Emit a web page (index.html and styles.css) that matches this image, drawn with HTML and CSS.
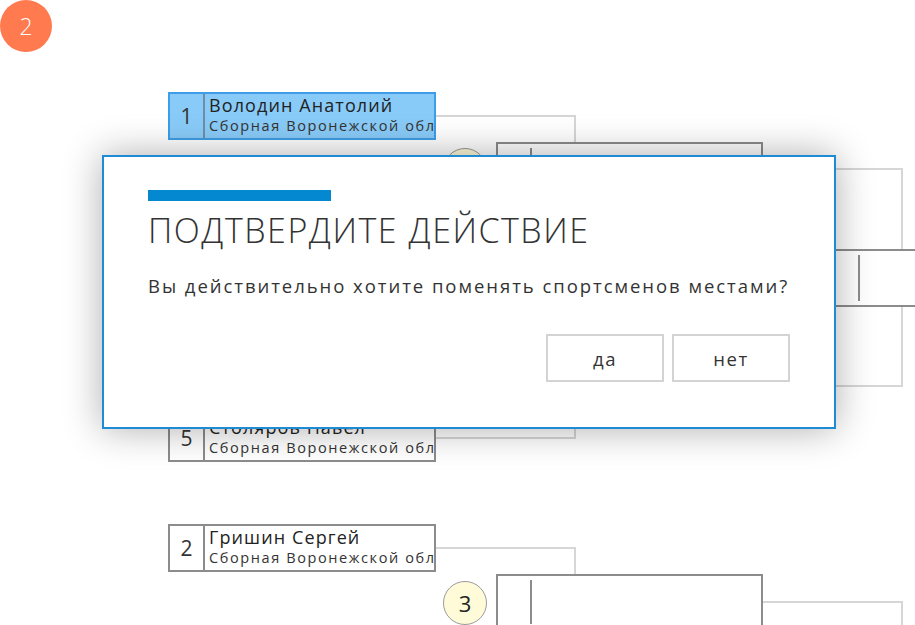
FILE: index.html
```html
<!DOCTYPE html>
<html lang="ru">
<head>
<meta charset="utf-8">
<title>Сетка</title>
<link rel="stylesheet" href="styles.css">
</head>
<body>
<div class="canvas">
  <div class="step-badge">2</div>

  <svg class="links" width="915" height="625" viewBox="0 0 915 625">
    <g fill="none" stroke="#d6d6d6" stroke-width="2">
      <polyline points="436,116 575,116 575,142"/>
      <polyline points="436,222 575,222 575,196"/>
      <polyline points="436,334 575,334 575,359"/>
      <polyline points="436,438 575,438 575,413"/>
      <polyline points="436,548 575,548 575,574"/>
      <polyline points="763,169 902,169 902,249"/>
      <polyline points="763,386 902,386 902,307"/>
      <polyline points="763,602 902,602 902,640"/>
    </g>
  </svg>

  <div class="slot slot-a selected">
    <div class="seed">1</div>
    <div class="who"><div class="name">Володин Анатолий</div><div class="team">Сборная Воронежской области</div></div>
  </div>
  <div class="slot slot-b"></div>
  <div class="slot slot-c"></div>
  <div class="slot slot-d">
    <div class="seed">5</div>
    <div class="who"><div class="name">Столяров Павел</div><div class="team">Сборная Воронежской области</div></div>
  </div>
  <div class="slot slot-e">
    <div class="seed">2</div>
    <div class="who"><div class="name">Гришин Сергей</div><div class="team">Сборная Воронежской области</div></div>
  </div>

  <div class="bout bout-1"><div class="bout-seed"></div></div>
  <div class="bout bout-2"><div class="bout-seed"></div></div>
  <div class="bout bout-3"><div class="bout-seed"></div></div>
  <div class="bout bout-4"><div class="bout-seed"></div></div>

  <div class="mat mat-1"></div>
  <div class="mat mat-3">3</div>
</div>

<div class="dialog">
  <div class="accent"></div>
  <h1 class="dialog-title">ПОДТВЕРДИТЕ ДЕЙСТВИЕ</h1>
  <p class="dialog-text">Вы действительно хотите поменять спортсменов местами?</p>
  <div class="actions">
    <button class="btn">да</button>
    <button class="btn">нет</button>
  </div>
</div>
</body>
</html>
```

FILE: styles.css
```css
html, body {
  margin: 0;
  padding: 0;
  background: #ffffff;
  overflow: hidden;
}
body {
  position: relative;
  width: 915px;
  height: 625px;
  font-family: "Open Sans", "Noto Sans", "DejaVu Sans", sans-serif;
  color: #333333;
}
.canvas {
  position: relative;
  width: 915px;
  height: 625px;
  overflow: hidden;
}
.step-badge {
  position: absolute;
  left: 0;
  top: 0;
  width: 52px;
  height: 52px;
  border-radius: 50%;
  background: #ff7a4f;
  color: #ffffff;
  font-size: 23px;
  font-weight: 300;
  display: flex;
  align-items: center;
  justify-content: center;
}
.links {
  position: absolute;
  left: 0;
  top: 0;
}

/* first-round slots */
.slot {
  position: absolute;
  left: 168px;
  width: 268px;
  height: 48px;
  box-sizing: border-box;
  border: 2px solid #8c8c8c;
  background: #ffffff;
  display: flex;
}
.slot-a { top: 92px; }
.slot-b { top: 198px; }
.slot-c { top: 310px; }
.slot-d { top: 414px; }
.slot-e { top: 524px; }
.slot.selected {
  background: #89cbf8;
  border-color: #3e9de6;
}
.seed {
  width: 33px;
  flex: none;
  border-right: 2px solid #8c8c8c;
  display: flex;
  align-items: center;
  justify-content: center;
  font-size: 21px;
  color: #333333;
}
.selected .seed { border-right-color: #6f8ea6; }
.who {
  flex: 1;
  min-width: 0;
  overflow: hidden;
  padding: 0 0 0 4px;
  white-space: nowrap;
}
.name {
  font-size: 18px;
  line-height: 22px;
  letter-spacing: 1.1px;
  color: #222222;
}
.team {
  font-size: 14.5px;
  line-height: 20px;
  letter-spacing: 1.6px;
  color: #333333;
}

/* second / third round bouts */
.bout {
  position: absolute;
  width: 267px;
  height: 56px;
  box-sizing: border-box;
  border: 2px solid #8c8c8c;
  background: #ffffff;
  display: flex;
  padding: 4px 0;
}
.bout-1 { left: 496px; top: 142px; }
.bout-2 { left: 496px; top: 359px; }
.bout-3 { left: 496px; top: 574px; }
.bout-4 { left: 824px; top: 249px; height: 58px; }
.bout-seed {
  width: 32px;
  flex: none;
  border-right: 2px solid #8c8c8c;
}

.mat {
  position: absolute;
  left: 443px;
  width: 44px;
  height: 44px;
  box-sizing: border-box;
  border-radius: 50%;
  border: 1.5px solid #9a9a9a;
  background: #fffbd9;
  display: flex;
  align-items: center;
  justify-content: center;
  font-size: 22px;
  color: #222222;
}
.mat-1 { top: 148px; }
.mat-3 { top: 581px; }

/* dialog overlay */
.dialog {
  position: absolute;
  left: 102px;
  top: 155px;
  width: 734px;
  height: 274px;
  box-sizing: border-box;
  border: 2px solid #1e8bd3;
  background: #ffffff;
  box-shadow: 0 0 36px rgba(0, 0, 0, 0.32);
  padding: 33px 44px 0 44px;
  display: flex;
  flex-direction: column;
}
.accent {
  width: 183px;
  height: 11px;
  background: #0488cf;
}
.dialog-title {
  margin: 7px 0 0 0;
  font-size: 34px;
  font-weight: 300;
  line-height: 44px;
  color: #333333;
  letter-spacing: 1.5px;
}
.dialog-text {
  margin: 22px -10px 0 0;
  font-size: 18.5px;
  line-height: 24px;
  letter-spacing: 1.95px;
  white-space: nowrap;
  color: #333333;
}
.actions {
  margin-top: 36px;
  display: flex;
  justify-content: flex-end;
  gap: 8px;
}
.btn {
  width: 118px;
  height: 48px;
  box-sizing: border-box;
  border: 2px solid #d3d3d3;
  background: #ffffff;
  font-family: "Open Sans", "Noto Sans", sans-serif;
  font-size: 18.5px;
  letter-spacing: 1.5px;
  color: #333333;
  padding: 0;
}
```
